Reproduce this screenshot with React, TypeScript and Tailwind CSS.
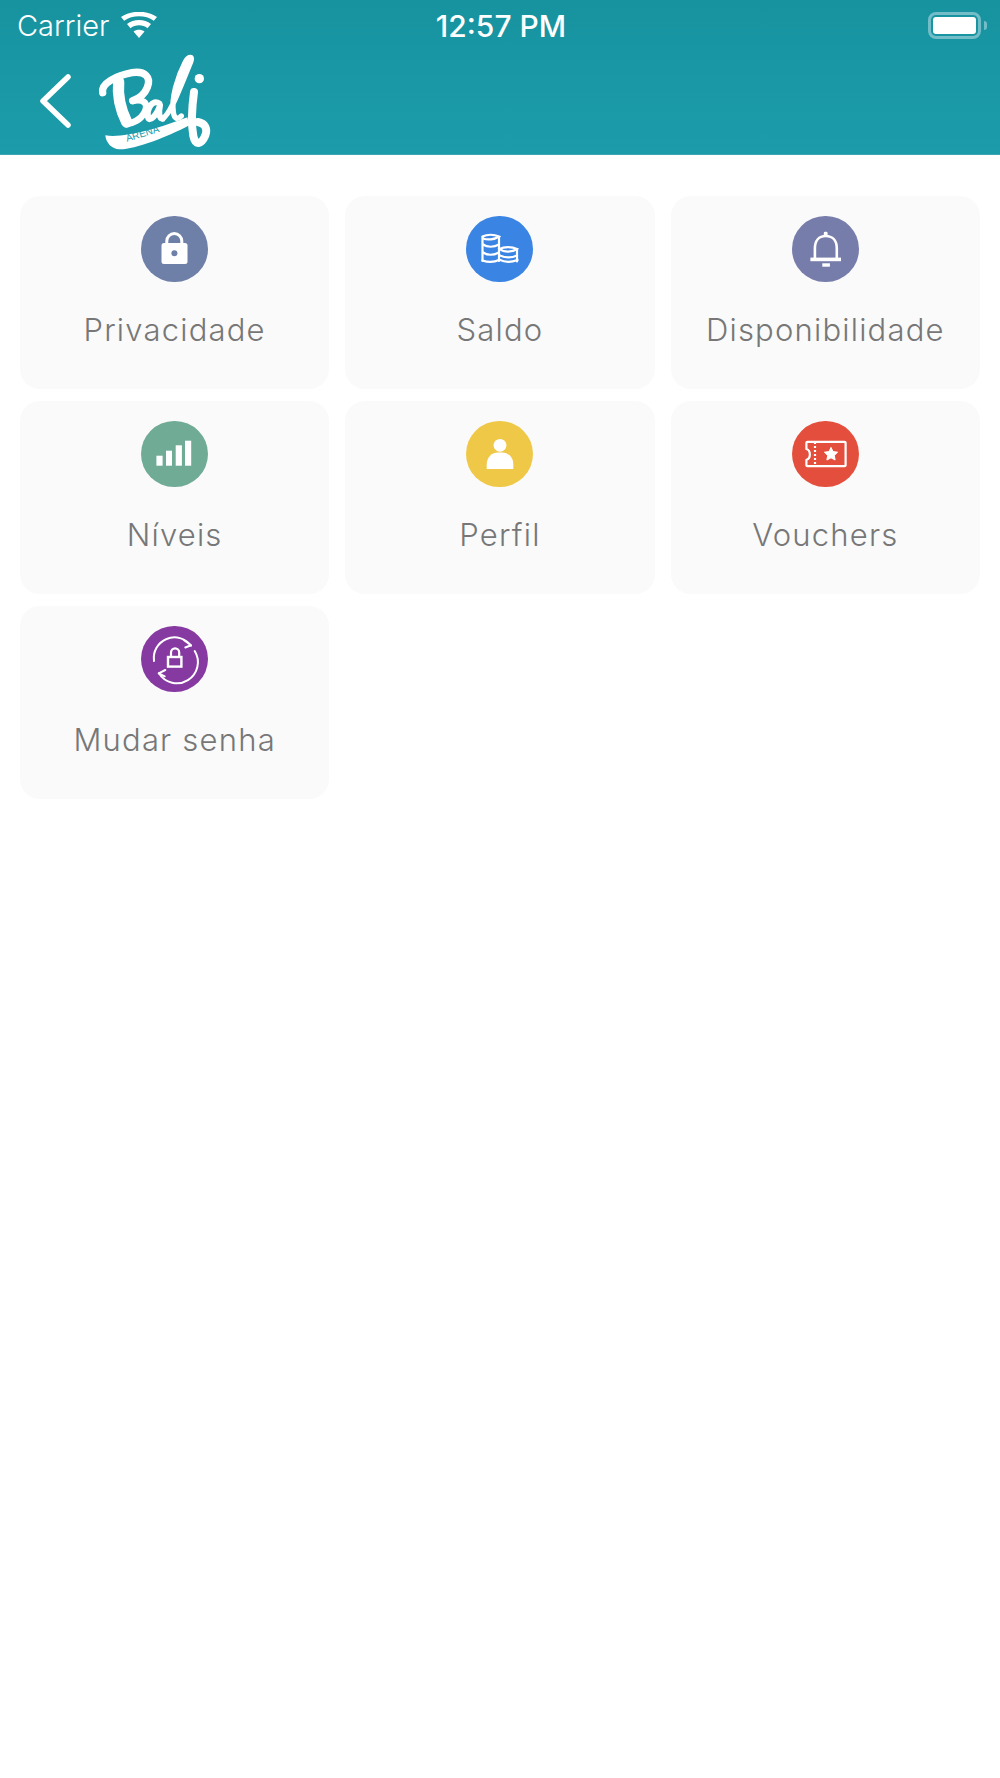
import React from "react";

const WHITE = "#ffffff";

function LockIcon() {
  return (
    <svg width="67" height="66" viewBox="0 0 67 66">
      <path d="M25.8 28 V25 a7.5 7.5 0 0 1 15 0 V28" fill="none" stroke={WHITE} strokeWidth="3" />
      <rect x="20.5" y="27" width="26" height="21" rx="2.5" fill={WHITE} />
      <circle cx="33.4" cy="37.3" r="3" fill="#6e7fa8" />
    </svg>
  );
}

function CoinsIcon() {
  return (
    <svg width="67" height="66" viewBox="0 0 67 66" fill="none" stroke={WHITE} strokeWidth="2.2" strokeLinecap="round">
      <path d="M16.5 21 V45 M33 21 V45 M51 33.5 V45.5" />
      <path d="M16.5 20.5 C21 18.4 28 18.4 33 20.5 C28 24 21 24 17 22.5" />
      <path d="M17 28.5 C21 31.5 28 31.5 33 28.5" />
      <path d="M17 36.5 C21 39.5 28 39.5 33 36.5" />
      <path d="M16.5 44.5 C22 46.5 28 46.5 33.5 43.8 C39 46.5 45 46.5 51.5 44" />
      <path d="M33.5 33 C38 30.6 46 30.6 51 33 C46 36.5 38 36.5 33.5 33 Z" />
      <path d="M34 39.5 C39 41.8 46 41.8 51 39.5" />
    </svg>
  );
}

function BellIcon() {
  return (
    <svg width="67" height="66" viewBox="0 0 67 66" fill="none" stroke={WHITE}>
      <rect x="31.8" y="15.7" width="3.8" height="5" rx="1.4" fill={WHITE} stroke="none" />
      <path d="M22.9 43 V32.5 C22.9 24.5 27 20 33.7 20 C40.4 20 44.8 24.5 44.8 32.5 V43" strokeWidth="2.6" />
      <rect x="18.4" y="41.6" width="30.6" height="3.6" fill={WHITE} stroke="none" />
      <rect x="30.3" y="47.3" width="7.6" height="3.4" fill={WHITE} stroke="none" />
    </svg>
  );
}

function BarsIcon() {
  return (
    <svg width="67" height="66" viewBox="0 0 67 66" fill={WHITE}>
      <rect x="15.4" y="34.7" width="6.2" height="10" />
      <rect x="25" y="29.7" width="6" height="15" />
      <rect x="34.7" y="24.3" width="6.2" height="20.4" />
      <rect x="44" y="19.7" width="6.2" height="25" />
    </svg>
  );
}

function PersonIcon() {
  return (
    <svg width="67" height="66" viewBox="0 0 67 66" fill={WHITE}>
      <circle cx="34" cy="24.3" r="6.4" />
      <path d="M20.7 48 V43.5 C20.7 36 26 31.4 32 31.4 H36 C42 31.4 47.3 36 47.3 43.5 V48 Z" />
    </svg>
  );
}

function VoucherIcon() {
  return (
    <svg width="67" height="66" viewBox="0 0 67 66" fill="none" stroke={WHITE} strokeWidth="2.2">
      <path
        d="M14.4 21.8 Q14.4 20.8 15.4 20.8 H52.6 Q53.6 20.8 53.6 21.8 V44.2 Q53.6 45.2 52.6 45.2 H15.4 Q14.4 45.2 14.4 44.2 V38.8 C19 37.5 19 29.5 14.4 28 Z"
        strokeLinejoin="round"
      />
      <path d="M23 21 V45" strokeDasharray="2 2" />
      <path
        d="M39 26.4 L41 30.6 L45.6 31.2 L42.3 34.4 L43.1 39 L39 36.8 L34.9 39 L35.7 34.4 L32.4 31.2 L37 30.6 Z"
        fill={WHITE}
        stroke={WHITE}
        strokeWidth="1"
        strokeLinejoin="round"
      />
    </svg>
  );
}

function RotateLockIcon() {
  return (
    <svg width="67" height="66" viewBox="0 0 67 66" fill="none" stroke={WHITE} strokeWidth="2" strokeLinecap="round" strokeLinejoin="round">
      <path d="M13 35 A20.7 20.7 0 0 1 50 19.6" />
      <path d="M42.7 14 L50 19.2 L44.3 21.5" />
      <path d="M53.7 25 A20.7 20.7 0 0 1 17.9 47.3" />
      <path d="M24.3 44 L17.7 47.3 L23.7 50.3" />
      <rect x="27" y="31" width="13.4" height="9.6" strokeWidth="2.4" strokeLinecap="butt" strokeLinejoin="miter" />
      <path d="M30 30 V26.5 a4.1 4.1 0 0 1 8.2 0 V30" strokeWidth="2.2" strokeLinecap="butt" />
    </svg>
  );
}

// Brush-script mark of the venue, drawn at three times its shown size
function BaliLogo() {
  return (
    <div className="relative h-[102px] w-[125px] shrink-0">
      <svg width="125" height="102" viewBox="0 0 375 306" fill="none" stroke={WHITE} strokeLinecap="round" strokeLinejoin="round">
        <path d="M32 128 C26 100 76 76 120 68 C160 62 178 82 166 112 C158 132 140 146 122 152" strokeWidth="22" />
        <path d="M80 96 C76 140 86 180 104 216" strokeWidth="34" />
        <path d="M122 152 C158 146 172 162 156 190 C146 208 124 220 104 222" strokeWidth="20" />
        <path d="M202 160 C182 146 164 176 168 202 C172 218 194 196 204 166 C200 186 200 204 212 206" strokeWidth="18" />
        <path d="M212 206 C236 192 264 112 296 36 C304 18 290 18 280 36 C256 82 238 144 244 186 C246 206 256 210 268 198" strokeWidth="16" />
        <path d="M306 126 C300 170 296 214 304 258 C310 288 328 284 340 256 C348 234 338 220 318 216" strokeWidth="24" />
        <circle cx="322" cy="86" r="14" fill={WHITE} stroke="none" />
        <path
          d="M40 256 C90 266 200 236 286 202 L292 226 C224 262 124 300 82 298 C60 297 42 280 40 256 Z"
          fill={WHITE}
          stroke="none"
        />
      </svg>
      <span className="absolute left-[34px] top-[84px] origin-left -rotate-[17deg] text-[10px] leading-none text-[#1b99a8] [font-family:'Liberation_Sans',sans-serif]">
        ARENA
      </span>
    </div>
  );
}

const tiles = [
  { label: "Privacidade", bg: "bg-[#6e7fa8]", icon: <LockIcon /> },
  { label: "Saldo", bg: "bg-[#3a84e3]", icon: <CoinsIcon /> },
  { label: "Disponibilidade", bg: "bg-[#777dab]", icon: <BellIcon /> },
  { label: "Níveis", bg: "bg-[#6fab95]", icon: <BarsIcon /> },
  { label: "Perfil", bg: "bg-[#f0c847]", icon: <PersonIcon /> },
  { label: "Vouchers", bg: "bg-[#e34f3c]", icon: <VoucherIcon /> },
  { label: "Mudar senha", bg: "bg-[#8539a1]", icon: <RotateLockIcon /> },
];

export default function App() {
  return (
    <div className="h-[1778px] w-[1000px] bg-white [font-family:Inter,sans-serif]">
      <header className="h-[155px] border-b border-[#3aa7b3] bg-gradient-to-b from-[#17939f] to-[#1c9cab] text-white">
        <div className="flex h-[50px] items-center justify-between pl-[17px] pr-[13px] pt-[1px]">
          <div className="flex w-[300px] items-center gap-[11px]">
            <span className="text-[29px] leading-none font-light">Carrier</span>
            <svg width="38" height="28" viewBox="0 0 38 28" fill={WHITE}>
              <path d="M19 26 L13.5 19.5 C16.5 17 21.5 17 24.5 19.5 Z" />
              <path d="M10.5 16.2 L7 12 C13.5 6.8 24.5 6.8 31 12 L27.5 16.2 C22.5 12.4 15.5 12.4 10.5 16.2 Z" />
              <path d="M4.2 8.7 L1 5 C10.5 -2 27.5 -2 37 5 L33.8 8.7 C25.5 2.8 12.5 2.8 4.2 8.7 Z" />
            </svg>
          </div>
          <span className="mr-[2px] text-[30px] leading-none font-medium">12:57 PM</span>
          <div className="flex w-[300px] items-center justify-end">
            <div className="h-[27px] w-[53px] rounded-[8px] border-[3px] border-[#72bdc7] p-[2px]">
              <div className="h-full w-full rounded-[3px] bg-white" />
            </div>
            <div className="ml-[3px] h-[9px] w-[3px] rounded-r-full bg-[#72bdc7]" />
          </div>
        </div>
        <div className="flex h-[104px] items-center pl-[40px]">
          <svg width="32" height="54" viewBox="0 0 32 54" fill="none" stroke={WHITE} strokeWidth="5.5" strokeLinecap="round" strokeLinejoin="round" className="mt-[-3px] shrink-0">
            <path d="M28 3 L3 27 L28 51" />
          </svg>
          <div className="ml-[20px] mt-[-2px]">
            <BaliLogo />
          </div>
        </div>
      </header>
      <main className="grid grid-cols-3 gap-x-[16px] gap-y-[12px] px-[20px] pt-[41px]">
        {tiles.map((tile) => (
          <div key={tile.label} className="flex h-[193px] flex-col items-center rounded-[20px] bg-[#fafafa] pt-[20px]">
            <div className={`flex h-[66px] w-[67px] items-center justify-center rounded-full ${tile.bg}`}>{tile.icon}</div>
            <span className="mt-[28px] text-[31px] leading-[40px] font-light tracking-[1.2px] text-[#777777]">{tile.label}</span>
          </div>
        ))}
      </main>
    </div>
  );
}
